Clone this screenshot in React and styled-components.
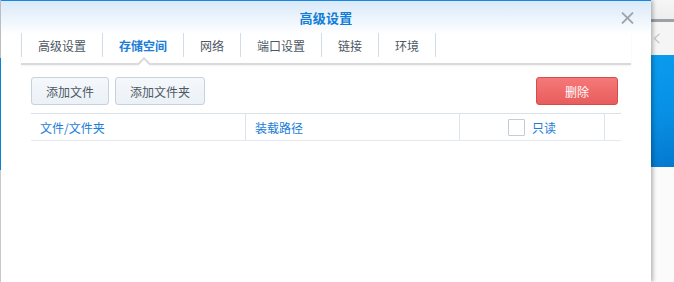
import React from "react";
import styled, { createGlobalStyle } from "styled-components";

const GlobalStyle = createGlobalStyle`
  html, body {
    margin: 0;
    padding: 0;
    height: 100%;
    overflow: hidden;
    background: #fbfbfb;
  }
  #root {
    height: 100%;
  }
  * {
    box-sizing: border-box;
  }
`;

const Screen = styled.div`
  display: flex;
  width: 674px;
  height: 282px;
  font-family: "Noto Sans CJK SC", "Noto Sans", sans-serif;
  font-size: 12px;
`;

const EdgeStrip = styled.div`
  width: 1px;
  flex-shrink: 0;
  background: linear-gradient(
    to bottom,
    #c4c4c4 0,
    #c4c4c4 58px,
    #0a86dc 58px,
    #0a86dc 170px,
    #cfcfcf 170px
  );
`;

const Dialog = styled.div`
  width: 650px;
  flex-shrink: 0;
  display: flex;
  flex-direction: column;
  border-top: 1px solid #1688e4;
  background: linear-gradient(to bottom, #d9e9f9 0, #ffffff 34px);
  box-shadow: 2px 0 4px rgba(0, 0, 0, 0.28);
  position: relative;
  z-index: 1;
`;

const Header = styled.div`
  height: 32px;
  display: flex;
  align-items: center;
  justify-content: center;
  position: relative;
`;

const Title = styled.div`
  font-size: 13px;
  font-weight: 700;
  color: #0f7dd8;
  letter-spacing: 0.2px;
`;

const CloseButton = styled.button`
  position: absolute;
  right: 17px;
  top: 10px;
  width: 14px;
  height: 14px;
  padding: 0;
  border: none;
  background: transparent;
  display: flex;
  align-items: center;
  justify-content: center;
`;

const Body = styled.div`
  padding: 0 20px;
  display: flex;
  flex-direction: column;
`;

const TabBar = styled.div`
  display: flex;
  padding-bottom: 6px;
  border-bottom: 2px solid #d9d9d9;
  box-shadow: 0 1px 2px rgba(0, 0, 0, 0.05);
`;

const Tab = styled.div`
  position: relative;
  height: 24px;
  padding: 0 16px;
  display: flex;
  align-items: center;
  border-left: 1px solid #d3dde7;
  &:last-child {
    border-right: 1px solid #d3dde7;
  }
  color: ${(p) => (p.$active ? "#1a7dd6" : "#4c5865")};
  font-weight: ${(p) => (p.$active ? 700 : 400)};
  &::after {
    content: "";
    display: ${(p) => (p.$active ? "block" : "none")};
    position: absolute;
    left: 50%;
    bottom: -12px;
    width: 8px;
    height: 8px;
    margin-left: -4px;
    background: #fff;
    border-top: 2px solid #d9d9d9;
    border-left: 2px solid #d9d9d9;
    transform: rotate(45deg);
  }
`;

const Panel = styled.div`
  padding: 12px 10px 0;
  display: flex;
  flex-direction: column;
  gap: 8px;
`;

const Toolbar = styled.div`
  display: flex;
  align-items: center;
  gap: 6px;
`;

const Button = styled.button`
  height: 28px;
  padding: 0 13px;
  border-radius: 3px;
  font-family: inherit;
  font-size: 12px;
  border: 1px solid ${(p) => (p.$danger ? "#d44d4d" : "#c6d2dd")};
  background: ${(p) =>
    p.$danger
      ? "linear-gradient(to bottom, #f67878, #e85d5d)"
      : "linear-gradient(to bottom, #f5f8fb, #ebf1f6)"};
  color: ${(p) => (p.$danger ? "#ffffff" : "#4c5865")};
  width: ${(p) => (p.$width ? p.$width + "px" : "auto")};
  margin-left: ${(p) => (p.$push ? "auto" : "0")};
  margin-right: ${(p) => (p.$push ? "3px" : "0")};
`;

const TableHead = styled.div`
  display: grid;
  grid-template-columns: 214px 214px 145px 1fr;
  height: 28px;
  border-top: 1px solid #d9e1e9;
  border-bottom: 1px solid #e3e9ef;
`;

const HeadCell = styled.div`
  display: flex;
  align-items: center;
  justify-content: ${(p) => (p.$center ? "center" : "flex-start")};
  gap: 7px;
  padding-left: ${(p) => (p.$center ? "0" : "9px")};
  color: #1a7dd8;
  border-left: ${(p) => (p.$first ? "none" : "1px solid #dde4eb")};
`;

const Checkbox = styled.span`
  width: 17px;
  height: 17px;
  border: 1px solid #c3cdd7;
  background: #fff;
  border-radius: 1px;
`;

const Backdrop = styled.div`
  flex: 1;
  display: flex;
  flex-direction: column;
  background: #fbfbfb;
`;

const BackdropBar = styled.div`
  height: 22px;
  background: linear-gradient(to bottom, #f6f6f6, #ededed);
  border-bottom: 3px solid #9ba1a7;
`;

const BackdropNav = styled.div`
  height: 33px;
  background: #f5f5f5;
  display: flex;
  align-items: center;
  padding-left: 2px;
`;

const BackdropBanner = styled.div`
  height: 112px;
  background: linear-gradient(165deg, #0a9cee 0%, #078fe4 55%, #0578cf 100%);
`;

const App = () => {
  const tabs = ["高级设置", "存储空间", "网络", "端口设置", "链接", "环境"];
  return (
    <>
      <GlobalStyle />
      <Screen>
        <EdgeStrip />
        <Dialog>
          <Header>
            <Title>高级设置</Title>
            <CloseButton>
              <svg width="13" height="12" viewBox="0 0 13 12">
                <path
                  d="M1 0.5 L12 11.5 M12 0.5 L1 11.5"
                  stroke="#a0a5aa"
                  strokeWidth="1.8"
                />
              </svg>
            </CloseButton>
          </Header>
          <Body>
            <TabBar>
              {tabs.map((t, i) => (
                <Tab key={t} $active={i === 1}>
                  {t}
                </Tab>
              ))}
            </TabBar>
            <Panel>
              <Toolbar>
                <Button $width={78}>添加文件</Button>
                <Button $width={90}>添加文件夹</Button>
                <Button $danger $push $width={82}>
                  删除
                </Button>
              </Toolbar>
              <TableHead>
                <HeadCell $first>文件/文件夹</HeadCell>
                <HeadCell>装载路径</HeadCell>
                <HeadCell $center>
                  <Checkbox />
                  只读
                </HeadCell>
                <HeadCell />
              </TableHead>
            </Panel>
          </Body>
        </Dialog>
        <Backdrop>
          <BackdropBar />
          <BackdropNav>
            <svg width="8" height="11" viewBox="0 0 8 11">
              <path d="M6.5 0.8 L1.5 5.5 L6.5 10.2" fill="none" stroke="#cacaca" strokeWidth="1.4" />
            </svg>
          </BackdropNav>
          <BackdropBanner />
        </Backdrop>
      </Screen>
    </>
  );
};

export default App;
